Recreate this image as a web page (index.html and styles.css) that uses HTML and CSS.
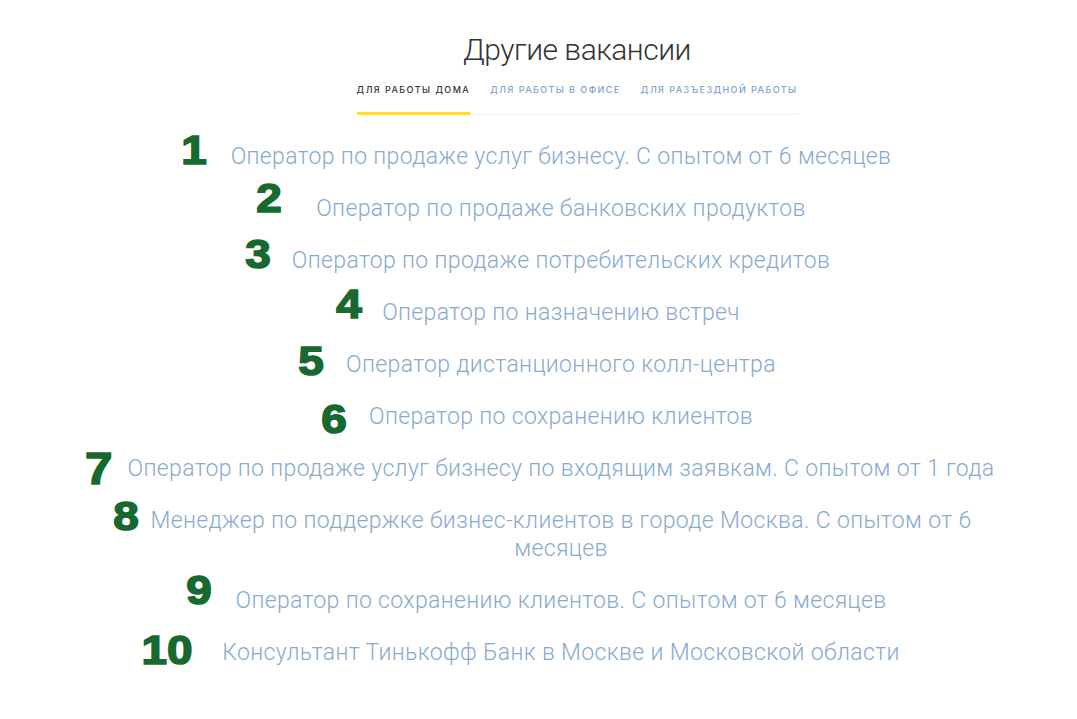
FILE: index.html
```html
<!DOCTYPE html>
<html lang="ru">
<head>
<meta charset="utf-8">
<title>Другие вакансии</title>
<link rel="stylesheet" href="styles.css">
</head>
<body>
<main class="page">
  <header class="head">
    <h1 class="title">Другие вакансии</h1>
    <nav class="tabs">
      <a class="tab tab-active">Для работы дома</a>
      <a class="tab">Для работы в офисе</a>
      <a class="tab">Для разъездной работы</a>
    </nav>
  </header>
  <ul class="jobs">
    <li class="item"><span class="job"><b class="num n1">1</b>Оператор по продаже услуг бизнесу. С опытом от 6 месяцев</span></li>
    <li class="item"><span class="job"><b class="num n2">2</b>Оператор по продаже банковских продуктов</span></li>
    <li class="item"><span class="job"><b class="num n3">3</b>Оператор по продаже потребительских кредитов</span></li>
    <li class="item"><span class="job"><b class="num n4">4</b>Оператор по назначению встреч</span></li>
    <li class="item"><span class="job"><b class="num n5">5</b>Оператор дистанционного колл-центра</span></li>
    <li class="item"><span class="job"><b class="num n6">6</b>Оператор по сохранению клиентов</span></li>
    <li class="item"><span class="job"><b class="num n7">7</b>Оператор по продаже услуг бизнесу по входящим заявкам. С опытом от 1 года</span></li>
    <li class="item"><span class="job"><b class="num n8">8</b>Менеджер по поддержке бизнес-клиентов в городе Москва. С опытом от 6 месяцев</span></li>
    <li class="item"><span class="job"><b class="num n9">9</b>Оператор по сохранению клиентов. С опытом от 6 месяцев</span></li>
    <li class="item"><span class="job"><b class="num n10">10</b>Консультант Тинькофф Банк в Москве и Московской области</span></li>
  </ul>
</main>
</body>
</html>
```
FILE: styles.css
```css
html, body {
  margin: 0;
  padding: 0;
  background: #ffffff;
}
body {
  font-family: Roboto, "Liberation Sans", Arial, sans-serif;
}
.page {
  width: 1077px;
  padding: 30px 0 0 45px;
  box-sizing: border-box;
}
.head {
  display: flex;
  flex-direction: column;
  align-items: center;
  padding-left: 32px;
}
.title {
  margin: 0;
  font-size: 30px;
  font-weight: 300;
  line-height: 40px;
  color: #333333;
  letter-spacing: -0.5px;
}
.tabs {
  display: flex;
  gap: 20px;
  margin-top: 14px;
  width: 441px;
  border-bottom: 1px solid #eeeeee;
}
.tab {
  display: block;
  padding: 0 0 16px;
  font-family: Inter, "Liberation Sans", Arial, sans-serif;
  font-size: 9px;
  font-weight: 500;
  letter-spacing: 1.45px;
  text-transform: uppercase;
  color: #7ea3c9;
  line-height: 12px;
  margin-bottom: -1px;
  border-bottom: 3px solid transparent;
  white-space: nowrap;
}
.tab-active {
  color: #333333;
  border-bottom-color: #ffdd2d;
}
.jobs {
  list-style: none;
  margin: 28px 0 0;
  padding: 0;
  display: flex;
  flex-direction: column;
  align-items: center;
  gap: 24px;
}
.item {
  display: block;
  text-align: center;
}
.job {
  position: relative;
  display: inline-block;
  max-width: 880px;
  font-size: 23px;
  font-weight: 300;
  line-height: 28px;
  letter-spacing: 0.35px;
  color: #87aad1;
}
.num {
  position: absolute;
  right: 100%;
  font-family: "Liberation Sans", Arial, sans-serif;
  font-weight: 700;
  font-size: 41px;
  line-height: 40px;
  letter-spacing: 0;
  color: #17692f;
  -webkit-text-stroke: 1.6px #17692f;
  transform: scaleX(1.12);
  transform-origin: right center;
}
.n1 { margin-right: 24px; top: -13px; }
.n2 { margin-right: 34px; top: -17px; }
.n3 { margin-right: 21px; top: -13px; }
.n4 { margin-right: 20px; top: -15px; }
.n5 { margin-right: 22px; top: -10px; }
.n6 { margin-right: 22px; top: -4px; }
.n7 { margin-right: 15px; top: -6px; font-size: 44px; }
.n8 { margin-right: -18px; top: -11px; }
.n9 { margin-right: 24px; top: -17px; }
.n10 { margin-right: 30px; top: -9px; }
```
